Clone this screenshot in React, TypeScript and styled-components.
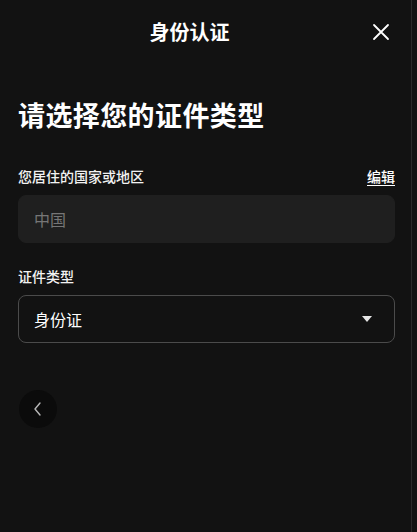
import styled, { createGlobalStyle } from 'styled-components';

const GlobalStyle = createGlobalStyle`
  html, body {
    margin: 0;
    padding: 0;
    background: #121212;
  }
  body {
    font-family: "Noto Sans CJK SC", "Noto Sans", sans-serif;
    color: #ffffff;
  }
  * { box-sizing: border-box; }
`;

const Page = styled.div`
  width: 412px;
  min-height: 532px;
  background: #121212;
  border-right: 1px solid #2a2a2a;
`;

const Header = styled.header`
  position: relative;
  height: 64px;
  display: flex;
  align-items: center;
  justify-content: center;
  padding-right: 32px;
`;

const HeaderTitle = styled.h1`
  margin: 0;
  font-size: 20px;
  font-weight: 700;
  line-height: 1;
`;

const CloseButton = styled.button`
  position: absolute;
  right: 20px;
  top: 22px;
  width: 20px;
  height: 20px;
  padding: 0;
  border: none;
  background: none;
  color: #fff;
  display: flex;
  align-items: center;
  justify-content: center;
`;

const Content = styled.main`
  padding: 33px 16px 0 18px;
`;

const Heading = styled.h2`
  margin: 0 0 33px;
  font-size: 27px;
  font-weight: 700;
  line-height: 36px;
  letter-spacing: 0.4px;
`;

const LabelRow = styled.div`
  display: flex;
  justify-content: space-between;
  align-items: center;
  height: 20px;
  line-height: 20px;
  margin-bottom: 9px;
`;

const Label = styled.span`
  font-size: 14px;
  font-weight: 500;
  color: #f2f2f2;
`;

const EditLink = styled.a`
  font-size: 14px;
  font-weight: 500;
  color: #fff;
  text-decoration: underline;
  text-underline-offset: 3px;
`;

const Field = styled.div<{ $filled?: boolean }>`
  height: 48px;
  border-radius: 8px;
  display: flex;
  align-items: center;
  justify-content: space-between;
  padding: 0 22px 0 15px;
  font-size: 16px;
  background: ${(p) => (p.$filled ? '#1f1f1f' : 'transparent')};
  border: 1px solid ${(p) => (p.$filled ? '#1f1f1f' : '#4b4b4b')};
  color: ${(p) => (p.$filled ? '#767676' : '#ffffff')};
  margin-bottom: 23px;
`;

const Caret = styled.span`
  width: 0;
  height: 0;
  border-left: 5.5px solid transparent;
  border-right: 5.5px solid transparent;
  border-top: 6px solid #e6e6e6;
`;

const BackButton = styled.button`
  margin-top: 47px;
  margin-left: 1px;
  width: 38px;
  height: 38px;
  border-radius: 50%;
  border: none;
  background: #0b0b0b;
  color: #b8b8b8;
  display: flex;
  align-items: center;
  justify-content: center;
  padding: 0;
`;

export default function App() {
  return (
    <>
      <GlobalStyle />
      <Page>
        <Header>
          <HeaderTitle>身份认证</HeaderTitle>
          <CloseButton aria-label="关闭">
            <svg width="18" height="18" viewBox="0 0 18 18" fill="none" stroke="currentColor" strokeWidth="1.8" strokeLinecap="round">
              <path d="M2 2L16 16M16 2L2 16" />
            </svg>
          </CloseButton>
        </Header>
        <Content>
          <Heading>请选择您的证件类型</Heading>
          <LabelRow>
            <Label>您居住的国家或地区</Label>
            <EditLink>编辑</EditLink>
          </LabelRow>
          <Field $filled>中国</Field>
          <LabelRow>
            <Label>证件类型</Label>
          </LabelRow>
          <Field>
            <span>身份证</span>
            <Caret />
          </Field>
          <BackButton aria-label="返回">
            <svg width="12" height="16" viewBox="0 0 12 16" fill="none" stroke="currentColor" strokeWidth="1.4" strokeLinecap="round" strokeLinejoin="round">
              <path d="M8 2L3 8L8 14" />
            </svg>
          </BackButton>
        </Content>
      </Page>
    </>
  );
}
